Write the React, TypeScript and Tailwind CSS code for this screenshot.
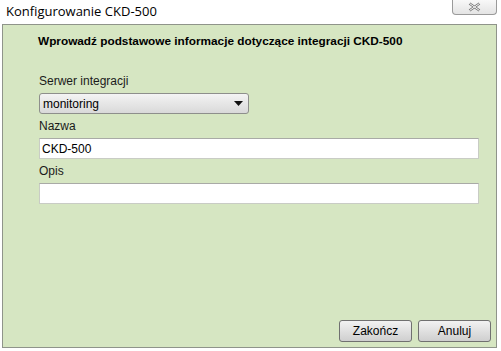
function Field({ label, value }: { label: string; value: string }) {
  return (
    <div className="flex flex-col">
      <div className="h-[20px] pt-[1px] text-[12px] leading-[14px] text-[#1a1a1a]">{label}</div>
      <div className="flex h-[21px] items-center border border-[#c9ccc5] border-t-[#a9aaa6] bg-white px-[2px] text-[12px] text-black">
        {value}
      </div>
    </div>
  )
}

export default function App() {
  return (
    <div className="h-[351px] w-[501px] overflow-hidden bg-white" style={{ fontFamily: '"Liberation Sans", Arial, sans-serif' }}>
      <div className="flex h-[24px] items-start justify-between">
        <div className="pl-[6px] pt-[3px] text-[13px] leading-[16px] text-black" style={{ fontFamily: '"Open Sans", "Noto Sans", sans-serif' }}>
          Konfigurowanie CKD-500
        </div>
        <div className="mr-[4px] flex h-[15px] w-[45px] items-center justify-center rounded-b-[4px] border border-t-0 border-[#9a9a9a] bg-gradient-to-b from-[#f8f8f8] to-[#e4e4e4]">
          <svg width="13" height="10" viewBox="0 0 13 10">
            <path d="M1.5 1.5 L11.5 8.5 M11.5 1.5 L1.5 8.5" stroke="#7a7a7a" strokeWidth="2.6" fill="none" />
            <path d="M1.5 1.5 L11.5 8.5 M11.5 1.5 L1.5 8.5" stroke="#fafafa" strokeWidth="1" fill="none" />
          </svg>
        </div>
      </div>
      <div className="mx-[2px] flex h-[324px] w-[495px] flex-col border border-[#8f948a] bg-[#d6e6c2]">
        <div className="pl-[35px] pt-[9px] text-[11.8px] font-bold leading-[14px] text-black">
          Wprowadź podstawowe informacje dotyczące integracji CKD-500
        </div>
        <div className="flex flex-col pl-[36px] pr-[17px] pt-[25px]">
          <div className="h-[20px] pt-[1px] text-[12px] leading-[14px] text-[#1a1a1a]">Serwer integracji</div>
          <div className="flex h-[21px] w-[210px] items-center justify-between rounded-[3px] border border-[#8e8f8c] bg-gradient-to-b from-[#f4f4f4] to-[#d9d9d9] px-[3px] text-[12px] text-black">
            <span>monitoring</span>
            <svg width="9" height="5" viewBox="0 0 9 5" className="mr-[2px]">
              <path d="M0 0 L9 0 L4.5 5 Z" fill="#111" />
            </svg>
          </div>
          <div className="mt-[4px] flex flex-col gap-[4px]">
            <Field label="Nazwa" value="CKD-500" />
            <Field label="Opis" value="" />
          </div>
        </div>
        <div className="mt-auto flex justify-end gap-[6px] pb-[5px] pr-[5px]">
          {['Zakończ', 'Anuluj'].map((t) => (
            <div
              key={t}
              className="flex h-[22px] w-[73px] items-center justify-center rounded-[3px] border border-[#707070] bg-gradient-to-b from-[#f2f2f2] to-[#cfcfcf] text-[12px] text-black"
            >
              {t}
            </div>
          ))}
        </div>
      </div>
    </div>
  )
}
